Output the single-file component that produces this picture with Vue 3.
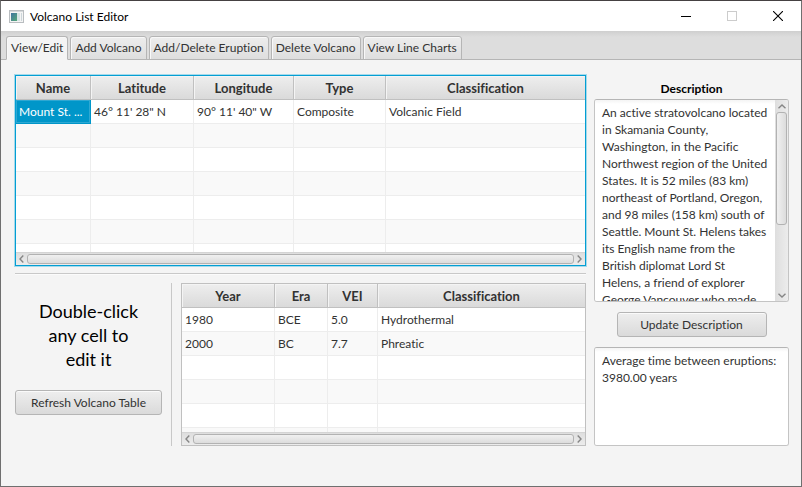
<script setup>
import { ref } from 'vue'

const tabs = ['View/Edit', 'Add Volcano', 'Add/Delete Eruption', 'Delete Volcano', 'View Line Charts']
const activeTab = ref(0)

const volcanoTable = {
  columns: [
    { label: 'Name', width: '75px' },
    { label: 'Latitude', width: '103px' },
    { label: 'Longitude', width: '100px' },
    { label: 'Type', width: '92px' },
    { label: 'Classification', width: 'auto' },
  ],
  rows: [
    ['Mount St. ...', '46° 11\' 28" N', '90° 11\' 40" W', 'Composite', 'Volcanic Field'],
    ...Array.from({ length: 6 }, () => ['', '', '', '', '']),
  ],
}

const eruptionTable = {
  columns: [
    { label: 'Year', width: '93px' },
    { label: 'Era', width: '53px' },
    { label: 'VEI', width: '50px' },
    { label: 'Classification', width: 'auto' },
  ],
  rows: [
    ['1980', 'BCE', '5.0', 'Hydrothermal'],
    ['2000', 'BC', '7.7', 'Phreatic'],
    ...Array.from({ length: 4 }, () => ['', '', '', '']),
  ],
}

const description = ref(
  'An active stratovolcano located in Skamania County, Washington, in the Pacific Northwest region of the United States. It is 52 miles (83 km) northeast of Portland, Oregon, and 98 miles (158 km) south of Seattle. Mount St. Helens takes its English name from the British diplomat Lord St\nHelens, a friend of explorer\nGeorge Vancouver who made'
)
const statistics = ref('Average time between eruptions: 3980.00 years')
</script>

<template>
  <div class="window">
    <header class="titlebar">
      <svg class="app-icon" width="15" height="13" viewBox="0 0 15 13" aria-hidden="true">
        <defs>
          <linearGradient id="appIconFill" x1="0" y1="0" x2="1" y2="1">
            <stop offset="0" stop-color="#3f74a0" />
            <stop offset="1" stop-color="#55a878" />
          </linearGradient>
        </defs>
        <rect x="0.5" y="0.5" width="14" height="12" fill="#f4f4f4" stroke="#b9bdc0" />
        <rect x="1" y="1" width="13" height="1" fill="#d5d8da" />
        <rect x="2" y="3" width="6" height="8" fill="url(#appIconFill)" />
        <rect x="8" y="3" width="3" height="8" fill="#d6e4e4" />
        <rect x="12" y="3" width="1" height="8" fill="#ccd6da" />
      </svg>
      <h1 class="title">Volcano List Editor</h1>
      <div class="window-controls">
        <button type="button" class="window-button" aria-label="Minimize">
          <svg width="10" height="10" viewBox="0 0 10 10"><path d="M0 5.5H10" stroke="#000" /></svg>
        </button>
        <button type="button" class="window-button" aria-label="Maximize" disabled>
          <svg width="10" height="10" viewBox="0 0 10 10"><rect x="0.5" y="0.5" width="9" height="9" fill="none" stroke="#ccc" /></svg>
        </button>
        <button type="button" class="window-button" aria-label="Close">
          <svg width="10" height="10" viewBox="0 0 10 10"><path d="M0 0L10 10M10 0L0 10" stroke="#000" stroke-width="1.1" /></svg>
        </button>
      </div>
    </header>

    <nav class="tabs" role="tablist">
      <button
        v-for="(tab, i) in tabs"
        :key="tab"
        type="button"
        role="tab"
        class="tab"
        :class="{ active: i === activeTab }"
        :aria-selected="i === activeTab"
        @click="activeTab = i"
      >{{ tab }}</button>
    </nav>

    <main class="content">
      <div class="tables">
        <div class="table-view volcanoes focused">
          <div class="viewport">
            <table>
              <colgroup>
                <col v-for="c in volcanoTable.columns" :key="c.label" :style="{ width: c.width }" />
              </colgroup>
              <thead>
                <tr><th v-for="c in volcanoTable.columns" :key="c.label" scope="col">{{ c.label }}</th></tr>
              </thead>
              <tbody>
                <tr v-for="(row, r) in volcanoTable.rows" :key="r">
                  <td v-for="(cell, c) in row" :key="c" :class="{ selected: r === 0 && c === 0 }">{{ cell }}</td>
                </tr>
              </tbody>
            </table>
          </div>
          <div class="scrollbar horizontal">
            <button type="button" class="arrow" aria-label="Scroll left">
              <svg width="5" height="8" viewBox="0 0 5 8"><path d="M4.3 0.5L1 4L4.3 7.5" fill="none" stroke="#868686" stroke-width="1.4" /></svg>
            </button>
            <div class="thumb"></div>
            <button type="button" class="arrow" aria-label="Scroll right">
              <svg width="5" height="8" viewBox="0 0 5 8"><path d="M0.7 0.5L4 4L0.7 7.5" fill="none" stroke="#868686" stroke-width="1.4" /></svg>
            </button>
          </div>
        </div>

        <hr class="divider" />

        <div class="lower">
          <section class="hint">
            <p class="hint-text">Double-click any cell to edit it</p>
            <button type="button" class="button refresh">Refresh Volcano Table</button>
          </section>
          <div class="table-view eruptions">
            <div class="viewport">
              <table>
                <colgroup>
                  <col v-for="c in eruptionTable.columns" :key="c.label" :style="{ width: c.width }" />
                </colgroup>
                <thead>
                  <tr><th v-for="c in eruptionTable.columns" :key="c.label" scope="col">{{ c.label }}</th></tr>
                </thead>
                <tbody>
                  <tr v-for="(row, r) in eruptionTable.rows" :key="r">
                    <td v-for="(cell, c) in row" :key="c">{{ cell }}</td>
                  </tr>
                </tbody>
              </table>
            </div>
            <div class="scrollbar horizontal">
              <button type="button" class="arrow" aria-label="Scroll left">
                <svg width="5" height="8" viewBox="0 0 5 8"><path d="M4.3 0.5L1 4L4.3 7.5" fill="none" stroke="#868686" stroke-width="1.4" /></svg>
              </button>
              <div class="thumb"></div>
              <button type="button" class="arrow" aria-label="Scroll right">
                <svg width="5" height="8" viewBox="0 0 5 8"><path d="M0.7 0.5L4 4L0.7 7.5" fill="none" stroke="#868686" stroke-width="1.4" /></svg>
              </button>
            </div>
          </div>
        </div>
      </div>

      <aside class="details">
        <label class="details-label" for="description">Description</label>
        <div class="text-area description">
          <textarea id="description" v-model="description"></textarea>
          <div class="scrollbar vertical">
            <button type="button" class="arrow" aria-label="Scroll up">
              <svg width="8" height="5" viewBox="0 0 8 5"><path d="M0.5 4.3L4 1L7.5 4.3" fill="none" stroke="#868686" stroke-width="1.4" /></svg>
            </button>
            <div class="track"><div class="thumb"></div></div>
            <button type="button" class="arrow" aria-label="Scroll down">
              <svg width="8" height="5" viewBox="0 0 8 5"><path d="M0.5 0.7L4 4L7.5 0.7" fill="none" stroke="#868686" stroke-width="1.4" /></svg>
            </button>
          </div>
        </div>
        <button type="button" class="button update">Update Description</button>
        <div class="text-area statistics">
          <textarea v-model="statistics" aria-label="Statistics" readonly></textarea>
        </div>
      </aside>
    </main>
  </div>
</template>

<style>
body {
  margin: 0;
}
</style>

<style scoped>
.window {
  box-sizing: border-box;
  min-height: 100vh;
  display: flex;
  flex-direction: column;
  border: 1px solid #6f6f6f;
  border-top-color: #454142;
  background: #f4f4f4;
  color: #323232;
  font: 12px/17px Lato, "Open Sans", sans-serif;
  font-variant-ligatures: none;
}

button,
textarea {
  font: inherit;
  font-variant-ligatures: none;
  color: inherit;
}

.titlebar {
  display: flex;
  align-items: center;
  height: 30px;
  padding-left: 8px;
  background: #fff;
}

.title {
  flex: 1;
  margin: 0 0 0 6px;
  font-size: 12px;
  font-weight: 400;
  color: #000;
}

.window-controls {
  display: flex;
}

.window-button {
  display: flex;
  align-items: center;
  justify-content: center;
  width: 46px;
  height: 28px;
  padding: 0;
  border: 0;
  background: none;
}

.tabs {
  display: flex;
  align-items: flex-end;
  gap: 2px;
  height: 29px;
  padding-left: 5px;
  background: linear-gradient(#cfcfcf, #dddddd 6px);
  box-shadow: inset 0 -1px #b5b5b5;
}

.tab {
  box-sizing: border-box;
  height: 24px;
  padding: 0 4px;
  border: 1px solid #b5b5b5;
  border-radius: 3px 3px 0 0;
  background: linear-gradient(#ededed, #dedede);
  box-shadow: inset 1px 1px #f8f8f8;
  line-height: 22px;
  white-space: nowrap;
}

.tab.active {
  border-bottom-color: #f4f4f4;
  background: #f4f4f4;
}

.content {
  display: flex;
  align-items: flex-start;
  gap: 8px;
  padding: 15px 12px 40px 14px;
}

.tables {
  flex: 1;
  min-width: 0;
}

.table-view {
  box-sizing: border-box;
  display: flex;
  flex-direction: column;
  border: 1px solid #c0c0c0;
  background: #fff;
}

.table-view.focused {
  border-color: #039ed3;
  box-shadow: 0 0 0 1px #a5daeb;
}

.volcanoes {
  height: 191px;
}

.eruptions {
  flex: 1;
  min-width: 0;
  height: 163px;
}

.viewport {
  flex: 1;
  min-height: 0;
  overflow: hidden;
}

table {
  width: 100%;
  table-layout: fixed;
  border-collapse: separate;
  border-spacing: 0;
}

th,
td {
  box-sizing: border-box;
  height: 24px;
  padding: 0 3px;
  overflow: hidden;
  line-height: 22px;
  text-overflow: ellipsis;
  white-space: nowrap;
}

th {
  border-right: 1px solid #c0c0c0;
  border-bottom: 1px solid #c0c0c0;
  background: linear-gradient(#eeeeee, #dadada);
  box-shadow: inset 1px 1px #f4f4f4;
  font-size: 13px;
  font-weight: 700;
  text-align: center;
}

td {
  border-right: 1px solid #ededed;
  border-bottom: 1px solid #ededed;
  text-align: left;
}

th:last-child,
td:last-child {
  border-right: 0;
}

tbody tr:nth-child(even) {
  background: #f9f9f9;
}

td.selected {
  border-color: #0096c9;
  background: #0096c9;
  box-shadow: inset 0 0 0 1px #2ea8d3;
  color: #fff;
}

.scrollbar {
  flex: none;
  display: flex;
  box-sizing: border-box;
  background: linear-gradient(#dedede, #ececec);
}

.scrollbar.horizontal {
  height: 13px;
  padding: 1px 0;
  border-top: 1px solid #d4d4d4;
}

.scrollbar.vertical {
  flex-direction: column;
  width: 13px;
  padding: 0 1px;
  background: linear-gradient(90deg, #dedede, #ececec);
}

.arrow {
  flex: none;
  display: flex;
  align-items: center;
  justify-content: center;
  padding: 0;
  border: 0;
  background: none;
}

.horizontal .arrow {
  width: 11px;
}

.vertical .arrow {
  height: 12px;
}

.thumb {
  box-sizing: border-box;
  border: 1px solid #b2b2b2;
  border-radius: 3px;
  background: linear-gradient(#f0f0f0, #dcdcdc);
}

.horizontal .thumb {
  flex: 1;
}

.track {
  flex: 1;
}

.vertical .thumb {
  height: 64%;
  background: linear-gradient(90deg, #f0f0f0, #dcdcdc);
}

.divider {
  height: 1px;
  margin: 7px 0 9px;
  border: 0;
  background: #c8c8c8;
  box-shadow: 0 1px #fbfbfb;
}

.lower {
  display: flex;
  gap: 9px;
}

.hint {
  box-sizing: border-box;
  width: 157px;
  padding: 16px 9px 0 0;
  border-right: 1px solid #c8c8c8;
}

.hint-text {
  margin: 0 20px 19px;
  color: #000;
  font-size: 18px;
  line-height: 24px;
  text-align: center;
}

.button {
  box-sizing: border-box;
  height: 25px;
  padding: 0 8px;
  border: 1px solid #b5b5b5;
  border-radius: 3px;
  background: linear-gradient(#eeeeee, #dadada);
  box-shadow: inset 0 1px #fafafa;
  line-height: 22px;
  white-space: nowrap;
}

.refresh {
  width: 100%;
}

.details {
  display: flex;
  flex-direction: column;
  width: 195px;
}

.details-label {
  margin: 5px 0 2px;
  color: #000;
  font-size: 12px;
  font-weight: 700;
  text-align: center;
}

.text-area {
  box-sizing: border-box;
  display: flex;
  overflow: hidden;
  border: 1px solid #c4c4c4;
  border-top-color: #b5b5b5;
  border-radius: 3px;
  background: #fff;
}

.text-area textarea {
  box-sizing: border-box;
  flex: 1;
  min-width: 0;
  margin: 0;
  padding: 4px 6px 0 7px;
  border: 0;
  outline: 0;
  overflow: hidden;
  resize: none;
  background: linear-gradient(#f4f4f4, #fff 4px);
  line-height: 17px;
}

.description {
  height: 203px;
}

.update {
  align-self: center;
  width: 150px;
  margin: 10px 0;
}

.statistics {
  height: 99px;
}
</style>
